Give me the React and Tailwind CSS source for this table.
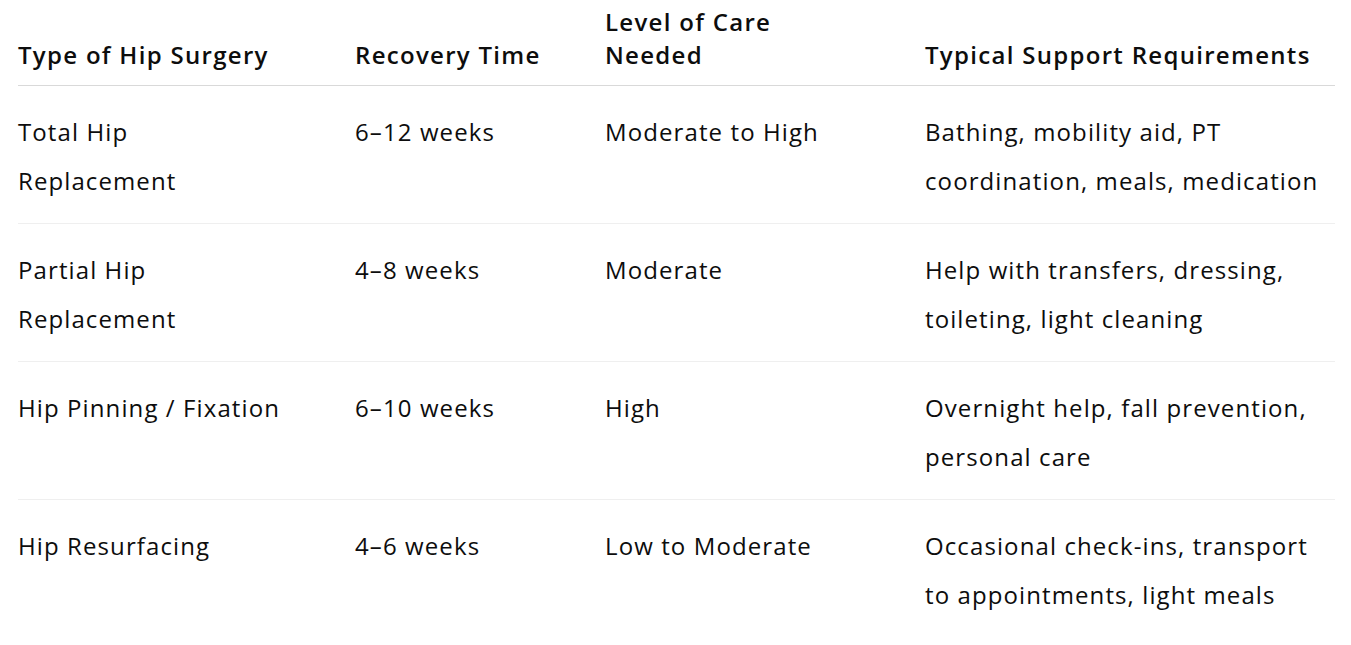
import React from 'react'

const rows = [
  { type: ['Total Hip', 'Replacement'], time: '6–12 weeks', care: 'Moderate to High', support: ['Bathing, mobility aid, PT', 'coordination, meals, medication'] },
  { type: ['Partial Hip', 'Replacement'], time: '4–8 weeks', care: 'Moderate', support: ['Help with transfers, dressing,', 'toileting, light cleaning'] },
  { type: ['Hip Pinning / Fixation'], time: '6–10 weeks', care: 'High', support: ['Overnight help, fall prevention,', 'personal care'] },
  { type: ['Hip Resurfacing'], time: '4–6 weeks', care: 'Low to Moderate', support: ['Occasional check-ins, transport', 'to appointments, light meals'] },
]

function Lines({ lines }) {
  return lines.map((l, i) => <span key={i} className="block whitespace-nowrap">{l}</span>)
}

export default function App() {
  return (
    <div className="bg-white min-h-[645px] pt-[5px] pl-[18px] text-[#0d0d0d]" style={{ fontFamily: '"Open Sans", "Noto Sans", sans-serif' }}>
      <table className="table-fixed border-collapse w-[1317px] text-[24px]">
        <colgroup>
          <col className="w-[337px]" />
          <col className="w-[250px]" />
          <col className="w-[320px]" />
          <col className="w-[410px]" />
        </colgroup>
        <thead>
          <tr className="border-b border-[#d9d9d9] align-bottom">
            <th className="text-left font-semibold tracking-[1.3px] leading-[33px] pb-[14px]">Type of Hip Surgery</th>
            <th className="text-left font-semibold tracking-[1.3px] leading-[33px] pb-[14px]">Recovery Time</th>
            <th className="text-left font-semibold tracking-[1.3px] leading-[33px] pb-[14px]"><Lines lines={['Level of Care', 'Needed']} /></th>
            <th className="text-left font-semibold tracking-[1.3px] leading-[33px] pb-[14px]">Typical Support Requirements</th>
          </tr>
        </thead>
        <tbody>
          {rows.map((r, i) => (
            <tr key={i} className={`align-top h-[138px] tracking-[1.1px] ${i < rows.length - 1 ? 'border-b border-[#efefef]' : ''}`}>
              <td className="pt-[21px] leading-[49px]"><Lines lines={r.type} /></td>
              <td className="pt-[21px] leading-[49px]">{r.time}</td>
              <td className="pt-[21px] leading-[49px]">{r.care}</td>
              <td className="pt-[21px] leading-[49px]"><Lines lines={r.support} /></td>
            </tr>
          ))}
        </tbody>
      </table>
    </div>
  )
}
